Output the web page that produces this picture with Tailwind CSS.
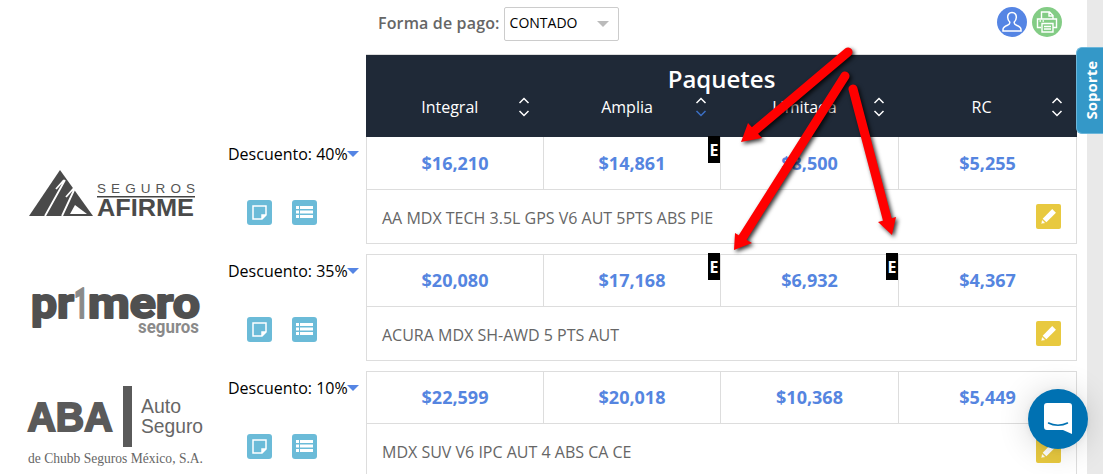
<!DOCTYPE html>
<html lang="es">
<head>
<meta charset="utf-8">
<script src="https://cdn.jsdelivr.net/npm/@tailwindcss/browser@4"></script>
</head>
<body class="m-0 bg-white overflow-hidden font-['Open_Sans',sans-serif]">
<div class="relative w-[1103px] h-[474px] overflow-hidden bg-white">
  <!-- scrollbar gutter -->
  <div class="absolute right-0 top-0 w-[16px] h-full bg-[#e9e9e9]"></div>

  <div class="w-[1087px] pr-[10px]">
    <!-- top bar -->
    <div class="h-[54px] pl-[378px] flex items-start">
      <span class="mt-[12px] text-[16px] leading-[22px] font-semibold tracking-[0.15px] text-[#666666]">Forma de pago:</span>
      <div class="ml-[4px] mt-[7px] w-[115px] h-[34px] border border-[#cccccc] rounded-[2px] flex items-center pl-[5px] pr-[9px] justify-between">
        <span class="text-[14px] leading-[18px] -mt-[2px] text-black">CONTADO</span>
        <span class="w-0 h-0 border-x-[6px] border-x-transparent border-t-[6px] border-t-[#bbbbbb]"></span>
      </div>
      <div class="ml-auto mt-[7px] mr-[15px] flex gap-[5px]">
        <span class="w-[30px] h-[30px] rounded-full bg-[#5585e4] flex items-center justify-center">
          <svg width="24" height="24" viewBox="0 0 24 24" fill="none" stroke="#fff" stroke-width="1.500"><path d="M12 2.500c-3 0-4.500 2.200-4.300 5 .1 1.800 .9 3.500 2 4.500.4 1.500-.3 2.500-2.200 3.200C5.300 16 3 17.200 3 19.500v1.500h18v-1.500c0-2.300-2.300-3.500-4.500-4.300-1.900-.7-2.600-1.700-2.200-3.200 1.100-1 1.900-2.700 2-4.500.2-2.800-1.300-5-4.300-5z"/></svg>
        </span>
        <span class="w-[30px] h-[30px] rounded-full bg-[#83cc85] flex items-center justify-center">
          <svg width="24" height="24" viewBox="0 0 24 24" fill="none" stroke="#fff" stroke-width="1.400"><path d="M6.500 9V2h8l3.500 3.500V9M14 2v4h4M6 17.500H2.500V9h19v8.500H18"/><path d="M7 13.500h11V22H7zM9 16.500h7M9 19h7M4.500 11h1.500M7.500 11H9"/></svg>
        </span>
      </div>
    </div>

    <!-- header -->
    <div class="ml-[366px] h-[83px] bg-[#1f2937] border-t border-[#dddddd] text-white">
      <div class="text-center text-[24px] font-semibold leading-[30px] pt-[9px]">Paquetes</div>
      <div class="grid grid-cols-[177.500px_177px_178px_178px] mt-px">
        <div class="flex items-center pl-[16px] pr-[14px]"><span class="flex-1 text-center text-[16px]">Integral</span>
          <svg width="12" height="22" viewBox="0 0 12 22" fill="none" stroke="#fff" stroke-width="1.500"><path d="M1.500 7 6 2.500 10.500 7M1.500 15 6 19.500 10.500 15"/></svg></div>
        <div class="flex items-center pl-[16px] pr-[14px]"><span class="flex-1 text-center text-[16px]">Amplia</span>
          <svg width="12" height="22" viewBox="0 0 12 22" fill="none" stroke-width="1.500"><path stroke="#fff" d="M1.500 7 6 2.500 10.500 7"/><path stroke="#3b6fc4" d="M1.500 15 6 19.500 10.500 15"/></svg></div>
        <div class="flex items-center pl-[16px] pr-[14px]"><span class="flex-1 text-center text-[16px]">Limitada</span>
          <svg width="12" height="22" viewBox="0 0 12 22" fill="none" stroke="#fff" stroke-width="1.500"><path d="M1.500 7 6 2.500 10.500 7M1.500 15 6 19.500 10.500 15"/></svg></div>
        <div class="flex items-center pl-[14px] pr-[14px]"><span class="flex-1 text-center text-[16px]">RC</span>
          <svg width="12" height="22" viewBox="0 0 12 22" fill="none" stroke="#fff" stroke-width="1.500"><path d="M1.500 7 6 2.500 10.500 7M1.500 15 6 19.500 10.500 15"/></svg></div>
      </div>
    </div>

    <!-- row 1 -->
    <div class="flex h-[107px] mb-[10px]">
      <div class="w-[228px] shrink-0 pt-[33px] pl-[28px]">
        <svg width="170" height="50" viewBox="0 0 170 50">
          <path fill="#4a4a4a" d="M32 0 1 46h64z"/>
          <g fill="none" stroke="#fff" stroke-width="1.800">
            <path d="M37 10 17 46M36 10 28 19"/>
            <path d="M47 18 34 46M46 18 38 27"/>
          </g>
          <path fill="#fff" d="M47 35 42 44h17z"/>
          <text x="69" y="23" font-family="Liberation Sans" font-size="13.500" fill="#555" textLength="98" lengthAdjust="spacing">SEGUROS</text>
          <rect x="69" y="26" width="98" height="1.500" fill="#444"/>
          <text x="69" y="46" font-family="Liberation Sans" font-weight="700" font-size="24.500" fill="#4a4a4a" textLength="97" lengthAdjust="spacingAndGlyphs">AFIRME</text>
        </svg>
      </div>
      <div class="w-[138px] shrink-0">
        <div class="flex items-center h-[22px] mt-[6px] text-[16px] text-black whitespace-nowrap">Descuento: 40%<span class="-ml-px w-0 h-0 border-x-[6px] border-x-transparent border-t-[6px] border-t-[#5585e4]"></span></div>
        <div class="flex gap-[20px] pl-[19px] mt-[35px]">
          <span class="w-[25px] h-[25px] rounded-[3px] bg-[#6bbbd8] flex items-center justify-center"><svg width="15" height="15" viewBox="0 0 15 15" fill="none" stroke="#fff" stroke-width="1.500"><path d="M1 1h13v9l-4 4H1z"/><path fill="#fff" d="M10 14v-4h4"/></svg></span>
          <span class="w-[25px] h-[25px] rounded-[3px] bg-[#6bbbd8] flex items-center justify-center"><svg width="17" height="15" viewBox="0 0 17 15" fill="#fff"><path d="M0 1h3v3H0zM4 1h13v3H4zM0 5.500h3v3H0zM4 5.500h13v3H4zM0 10h3v3H0zM4 10h13v3H4z"/></svg></span>
        </div>
      </div>
      <div class="flex-1 border border-t-0 border-[#dddddd] text-[#5585e0]">
        <div class="grid grid-cols-[177px_177px_178px_1fr] h-[53px] border-b border-[#dddddd] text-[18px] font-bold text-center leading-[52px]">
          <div class="border-r border-[#dddddd]">$16,210</div>
          <div class="border-r border-[#dddddd]">$14,861</div>
          <div class="border-r border-[#dddddd]">$8,500</div>
          <div>$5,255</div>
        </div>
        <div class="flex items-center justify-between h-[53px] pl-[15px] pr-[15px] text-[#666666] text-[16px]">
          <span class="mt-[2px]">AA MDX TECH 3.5L GPS V6 AUT 5PTS ABS PIE</span>
          <span class="w-[25px] h-[25px] rounded-[2px] bg-[#e8c93f] flex items-center justify-center"><svg width="17" height="17" viewBox="0 0 16 16" fill="#fff"><path d="M11.500 1 15 4.500 6 13.500 2.500 10z"/><path d="M2 11 1 15 5 14z" stroke="#e8c93f" stroke-width="0.400"/></svg></span>
        </div>
      </div>
    </div>

    <!-- row 2 -->
    <div class="flex h-[107px] mb-[10px]">
      <div class="w-[228px] shrink-0 pt-[32px] pl-[28px]">
        <svg width="175" height="55" viewBox="0 0 175 55">
          <g font-family="Roboto" font-weight="700" font-size="42" stroke-width="2" stroke-linejoin="round">
            <text x="3" y="32" fill="#505050" stroke="#505050" textLength="43" lengthAdjust="spacingAndGlyphs">pr</text>
            <text x="46" y="32" fill="#8a8a8a" stroke="#8a8a8a" textLength="14" lengthAdjust="spacingAndGlyphs">1</text>
            <text x="60" y="32" fill="#505050" stroke="#505050" textLength="112" lengthAdjust="spacingAndGlyphs">mero</text>
          </g>
          <text x="110" y="47" font-family="Roboto" font-weight="700" font-size="18" fill="#8a8a8a" textLength="61" lengthAdjust="spacingAndGlyphs">seguros</text>
        </svg>
      </div>
      <div class="w-[138px] shrink-0">
        <div class="flex items-center h-[22px] mt-[6px] text-[16px] text-black whitespace-nowrap">Descuento: 35%<span class="-ml-px w-0 h-0 border-x-[6px] border-x-transparent border-t-[6px] border-t-[#5585e4]"></span></div>
        <div class="flex gap-[20px] pl-[19px] mt-[35px]">
          <span class="w-[25px] h-[25px] rounded-[3px] bg-[#6bbbd8] flex items-center justify-center"><svg width="15" height="15" viewBox="0 0 15 15" fill="none" stroke="#fff" stroke-width="1.500"><path d="M1 1h13v9l-4 4H1z"/><path fill="#fff" d="M10 14v-4h4"/></svg></span>
          <span class="w-[25px] h-[25px] rounded-[3px] bg-[#6bbbd8] flex items-center justify-center"><svg width="17" height="15" viewBox="0 0 17 15" fill="#fff"><path d="M0 1h3v3H0zM4 1h13v3H4zM0 5.500h3v3H0zM4 5.500h13v3H4zM0 10h3v3H0zM4 10h13v3H4z"/></svg></span>
        </div>
      </div>
      <div class="flex-1 border border-[#dddddd] text-[#5585e0]">
        <div class="grid grid-cols-[177px_177px_178px_1fr] h-[52px] border-b border-[#dddddd] text-[18px] font-bold text-center leading-[51px]">
          <div class="border-r border-[#dddddd]">$20,080</div>
          <div class="border-r border-[#dddddd]">$17,168</div>
          <div class="border-r border-[#dddddd]">$6,932</div>
          <div>$4,367</div>
        </div>
        <div class="flex items-center justify-between h-[53px] pl-[15px] pr-[15px] text-[#666666] text-[16px]">
          <span class="mt-[2px]">ACURA MDX SH-AWD 5 PTS AUT</span>
          <span class="w-[25px] h-[25px] rounded-[2px] bg-[#e8c93f] flex items-center justify-center"><svg width="17" height="17" viewBox="0 0 16 16" fill="#fff"><path d="M11.500 1 15 4.500 6 13.500 2.500 10z"/><path d="M2 11 1 15 5 14z" stroke="#e8c93f" stroke-width="0.400"/></svg></span>
        </div>
      </div>
    </div>

    <!-- row 3 -->
    <div class="flex h-[107px]">
      <div class="w-[228px] shrink-0 pt-[14px] pl-[26px]">
        <svg width="180" height="85" viewBox="0 0 180 85">
          <text x="1.500" y="45.500" font-family="Liberation Sans" font-weight="700" font-size="40" stroke="#5a5a5a" stroke-width="2" fill="#5a5a5a" textLength="85" lengthAdjust="spacingAndGlyphs">ABA</text>
          <rect x="97" y="1" width="9" height="61" fill="#5a5a5a"/>
          <text x="115" y="28" font-family="Liberation Sans" font-size="21" fill="#666" textLength="40" lengthAdjust="spacingAndGlyphs">Auto</text>
          <text x="115" y="48" font-family="Liberation Sans" font-size="21" fill="#666" textLength="62" lengthAdjust="spacingAndGlyphs">Seguro</text>
          <text x="2" y="78" font-family="Liberation Serif" font-size="15.500" fill="#666" textLength="175" lengthAdjust="spacingAndGlyphs">de Chubb Seguros México, S.A.</text>
        </svg>
      </div>
      <div class="w-[138px] shrink-0">
        <div class="flex items-center h-[22px] mt-[6px] text-[16px] text-black whitespace-nowrap">Descuento: 10%<span class="-ml-px w-0 h-0 border-x-[6px] border-x-transparent border-t-[6px] border-t-[#5585e4]"></span></div>
        <div class="flex gap-[20px] pl-[19px] mt-[35px]">
          <span class="w-[25px] h-[25px] rounded-[3px] bg-[#6bbbd8] flex items-center justify-center"><svg width="15" height="15" viewBox="0 0 15 15" fill="none" stroke="#fff" stroke-width="1.500"><path d="M1 1h13v9l-4 4H1z"/><path fill="#fff" d="M10 14v-4h4"/></svg></span>
          <span class="w-[25px] h-[25px] rounded-[3px] bg-[#6bbbd8] flex items-center justify-center"><svg width="17" height="15" viewBox="0 0 17 15" fill="#fff"><path d="M0 1h3v3H0zM4 1h13v3H4zM0 5.500h3v3H0zM4 5.500h13v3H4zM0 10h3v3H0zM4 10h13v3H4z"/></svg></span>
        </div>
      </div>
      <div class="flex-1 border border-[#dddddd] text-[#5585e0]">
        <div class="grid grid-cols-[177px_177px_178px_1fr] h-[52px] border-b border-[#dddddd] text-[18px] font-bold text-center leading-[51px]">
          <div class="border-r border-[#dddddd]">$22,599</div>
          <div class="border-r border-[#dddddd]">$20,018</div>
          <div class="border-r border-[#dddddd]">$10,368</div>
          <div>$5,449</div>
        </div>
        <div class="flex items-center justify-between h-[53px] pl-[15px] pr-[15px] text-[#666666] text-[16px]">
          <span class="mt-[2px]">MDX SUV V6 IPC AUT 4 ABS CA CE</span>
          <span class="w-[25px] h-[25px] rounded-[2px] bg-[#e8c93f] flex items-center justify-center"><svg width="17" height="17" viewBox="0 0 16 16" fill="#fff"><path d="M11.500 1 15 4.500 6 13.500 2.500 10z"/><path d="M2 11 1 15 5 14z" stroke="#e8c93f" stroke-width="0.400"/></svg></span>
        </div>
      </div>
    </div>
  </div>

  <!-- E badges -->
  <span class="absolute left-[708px] top-[136px] w-[12px] h-[27px] bg-black text-white text-[16px] font-bold leading-[29px] text-center overflow-hidden">E</span>
  <span class="absolute left-[708px] top-[253px] w-[12px] h-[27px] bg-black text-white text-[16px] font-bold leading-[29px] text-center overflow-hidden">E</span>
  <span class="absolute left-[886px] top-[253px] w-[12px] h-[27px] bg-black text-white text-[16px] font-bold leading-[29px] text-center overflow-hidden">E</span>

  <!-- red annotation arrows -->
  <svg class="absolute left-0 top-0 pointer-events-none drop-shadow-[2px_2px_2px_rgba(0,0,0,0.8)]" width="1103" height="474" viewBox="0 0 1103 474">
    <g fill="#ff0000" stroke="#ff0000">
      <path stroke-width="9" stroke-linecap="round" d="M848 52 752 133M845 76 743 237M853 89 888 222"/>
      <path stroke="none" d="M741 142 748 123 762 138zM734 250 735 233 752 243zM892 235 878 222 896 217z"/>
    </g>
  </svg>

  <!-- soporte tab -->
  <div class="absolute left-[1076px] top-[47px] w-[27px] h-[87px] pl-[3px] bg-[#3498c8] border border-r-0 border-[#6bb6da] rounded-l-[6px] flex items-center justify-center">
    <span class="-rotate-90 text-white text-[15px] font-bold whitespace-nowrap">Soporte</span>
  </div>

  <!-- chat bubble -->
  <div class="absolute left-[1028px] top-[389px] w-[60px] h-[60px] rounded-full bg-[#0071b2] shadow-[0_1px_6px_rgba(0,0,0,0.06),0_2px_32px_rgba(0,0,0,0.16)] flex items-center justify-center">
    <svg width="28" height="32" viewBox="0 0 28 32"><path fill="#fff" d="M3 0h22a3 3 0 0 1 3 3v28l-9-4H3a3 3 0 0 1-3-3V3a3 3 0 0 1 3-3z"/><path fill="none" stroke="#0071b2" stroke-width="1.500" stroke-linecap="round" d="M4.500 20c5.500 3 13.500 3 19 0"/></svg>
  </div>
</div>
</body>
</html>
